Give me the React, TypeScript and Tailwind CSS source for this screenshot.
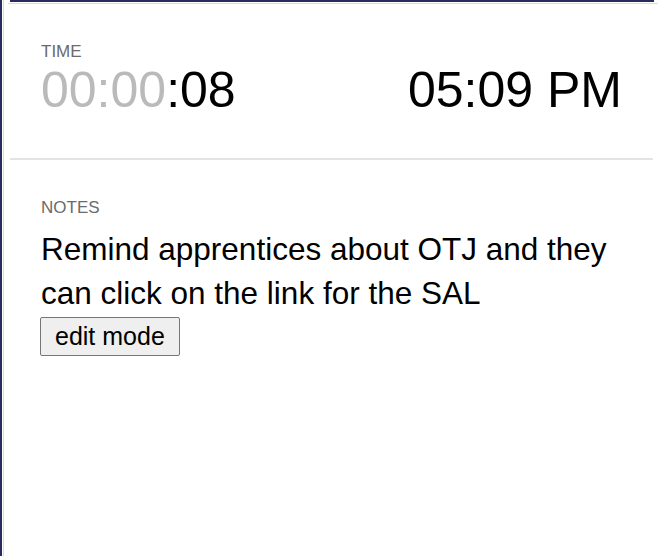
import React from "react";

const App: React.FC = () => {
  return (
    <div
      className="h-[556px] w-full bg-white border-l-2 border-[#2b2a5f] overflow-hidden"
      style={{ fontFamily: '"Liberation Sans", Arial, sans-serif' }}
    >
      <div className="h-full ml-px border-l border-[#dcdcdc]">
        {/* top frame */}
        <div className="ml-[4px] h-[4px] border-b border-[#dcdcdc]">
          <div className="ml-[2px] mr-[4px] h-[2px] bg-[#2b2a5f]" />
        </div>

        <div className="ml-[6px] mr-[5px]">
          {/* time section */}
          <section className="px-[31px] pt-[38px] pb-[40px]">
            <div className="text-[17px] leading-[20px] text-[#6b6b6b]">TIME</div>
            <div className="flex items-center justify-between text-[50px] leading-[56px] text-black">
              <div>
                <span className="text-[#bababa]">00:00</span>
                <span>:08</span>
              </div>
              <div>05:09 PM</div>
            </div>
          </section>

          <div className="h-[2px] bg-[#e3e3e3]" />

          {/* notes section */}
          <section className="px-[31px] pt-[38px]">
            <div className="text-[17px] leading-[20px] text-[#6b6b6b]">NOTES</div>
            <p className="mt-[9px] text-[31.5px] leading-[44px] text-black">
              Remind apprentices about OTJ and they can click on the link for the SAL
            </p>
            <button className="-ml-px mt-[2px] px-[14px] h-[39px] text-[25px] text-black bg-[#efefef] border border-[#767676] rounded-[2px]">
              edit mode
            </button>
          </section>
        </div>
      </div>
    </div>
  );
};

export default App;
